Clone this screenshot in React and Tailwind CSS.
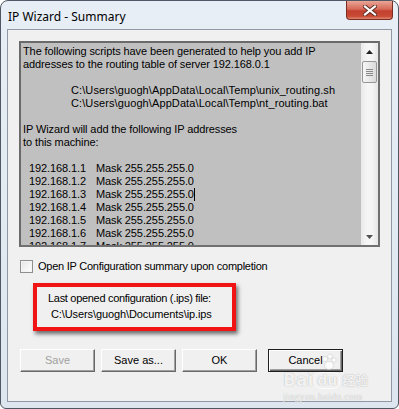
import React from "react";

const ips = ["192.168.1.1", "192.168.1.2", "192.168.1.3", "192.168.1.4", "192.168.1.5", "192.168.1.6", "192.168.1.7"];

const Btn = ({ children, disabled, isDefault }) => (
  <button
    className={
      isDefault
        ? "w-[75px] h-[23px] border border-[#1e1e1e] bg-[#f0f0f0] text-black shadow-[inset_1px_1px_0_#fff,inset_-1px_-1px_0_#696969,inset_-2px_-2px_0_#a0a0a0] flex items-center justify-center"
        : disabled
        ? "w-[75px] h-[23px] border border-t-white border-l-white border-b-[#696969] border-r-[#696969] bg-[#f0f0f0] text-[#a0a0a0] shadow-[inset_-1px_-1px_0_#a0a0a0] flex items-center justify-center"
        : "w-[75px] h-[23px] border border-t-white border-l-white border-b-[#696969] border-r-[#696969] bg-[#f0f0f0] text-black shadow-[inset_-1px_-1px_0_#a0a0a0] flex items-center justify-center"
    }
  >
    {children}
  </button>
);

const App = () => {
  return (
    <div className="w-[399px] h-[409px] bg-white font-['Liberation_Sans',Arial,sans-serif]">
      <div className="relative w-[399px] h-[409px] rounded-t-[8px] rounded-b-[6px] border border-[#4e5763] bg-gradient-to-b from-[#e7eef5] to-[#dde6ef] flex flex-col px-[6px] pb-[6px]">
        {/* title bar */}
        <div className="h-[28px] flex items-start">
          <div className="pl-[1px] pt-[8px] text-[12px] leading-[16px] text-black font-['Noto_Sans',sans-serif]">
            IP Wizard - Summary
          </div>
          <div className="ml-auto mr-[-1px] w-[47px] h-[19px] rounded-b-[4px] border border-t-0 border-[#7a2c22] bg-[linear-gradient(to_bottom,#eaa597,#d66a58_45%,#c2402f_55%,#c94a35_85%,#e08a70)] flex items-center justify-center">
            <svg width="14" height="11" viewBox="0 0 14 11">
              <path d="M2 1.5 L12 9.5 M12 1.5 L2 9.5" stroke="#5a2a24" strokeWidth="4" strokeLinecap="square" />
              <path d="M2 1.5 L12 9.5 M12 1.5 L2 9.5" stroke="#fff" strokeWidth="2.2" strokeLinecap="square" />
            </svg>
          </div>
        </div>

        {/* client area */}
        <div className="flex-1 border border-[#8f98a3] bg-[#f0f0f0] flex flex-col text-[11px] text-black">
          {/* text box */}
          <div className="ml-[11px] mt-[11px] w-[361px] h-[206px] border-2 border-t-[#6a6a6a] border-l-[#6a6a6a] border-b-[#707070] border-r-[#707070] flex bg-[#c0c0c0]">
            <div className="flex-1 overflow-hidden pl-[2px] pt-[2px] leading-[13px] tracking-[-0.1px] whitespace-pre">
              <div>The following scripts have been generated to help you add IP</div>
              <div>addresses to the routing table of server 192.168.0.1</div>
              <div>&nbsp;</div>
              <div className="pl-[48px] tracking-[0.1px]">C:\Users\guogh\AppData\Local\Temp\unix_routing.sh</div>
              <div className="pl-[48px] tracking-[0.1px]">C:\Users\guogh\AppData\Local\Temp\nt_routing.bat</div>
              <div>&nbsp;</div>
              <div>IP Wizard will add the following IP addresses</div>
              <div>to this machine:</div>
              <div>&nbsp;</div>
              {ips.map((ip, i) => (
                <div key={ip} className="flex pl-[6px]">
                  <span className="w-[67px]">{ip}</span>
                  <span>Mask 255.255.255.0</span>
                  {i === 2 && <span className="w-px h-[13px] bg-black" />}
                </div>
              ))}
            </div>
            {/* scrollbar */}
            <div className="w-[17px] flex flex-col items-center bg-[linear-gradient(to_right,#e9e9e9,#f5f5f5_35%,#f5f5f5_65%,#e6e6e6)]">
              <div className="h-[17px] w-full flex items-center justify-center">
                <svg width="7" height="4" viewBox="0 0 7 4">
                  <path d="M3.5 0 L7 4 L0 4 Z" fill="#202020" />
                </svg>
              </div>
              <div className="mt-[1px] w-[15px] h-[22px] rounded-[2px] border border-[#979797] bg-gradient-to-r from-[#f7f7f7] to-[#dadada] flex flex-col items-center justify-center gap-[1px]">
                <div className="w-[7px] h-px bg-[#8a8a8a]" />
                <div className="w-[7px] h-px bg-[#8a8a8a]" />
                <div className="w-[7px] h-px bg-[#8a8a8a]" />
                <div className="w-[7px] h-px bg-[#8a8a8a]" />
              </div>
              <div className="flex-1" />
              <div className="h-[17px] w-full flex items-center justify-center">
                <svg width="7" height="4" viewBox="0 0 7 4">
                  <path d="M0 0 L7 0 L3.5 4 Z" fill="#505050" />
                </svg>
              </div>
            </div>
          </div>

          {/* checkbox */}
          <div className="ml-[12px] mt-[13px] flex items-center h-[13px]">
            <div className="w-[13px] h-[13px] border border-[#8e8f8f] bg-gradient-to-br from-[#e4e4e4] to-white shadow-[inset_0_0_0_1px_#f4f4f4]" />
            <span className="ml-[5px] leading-[13px] tracking-[-0.25px]">Open IP Configuration summary upon completion</span>
          </div>

          {/* highlighted info box */}
          <div className="ml-[25px] mt-[10px] w-[203px] h-[48px] border-4 border-[#f01414] shadow-[2px_3px_4px_rgba(0,0,0,0.55)] pl-[11px] pt-[3px] leading-[16px] tracking-[-0.3px]">
            <div>Last opened configuration (.ips) file:</div>
            <div className="pl-[3px] tracking-[-0.1px]">C:\Users\guogh\Documents\ip.ips</div>
          </div>

          {/* buttons */}
          <div className="ml-[12px] mt-[18px] flex">
            <Btn disabled>Save</Btn>
            <div className="w-[6px]" />
            <Btn>Save as...</Btn>
            <div className="w-[6px]" />
            <Btn>OK</Btn>
            <div className="w-[11px]" />
            <Btn isDefault>Cancel</Btn>
          </div>
        </div>

        {/* watermark */}
        <div className="absolute left-[282px] top-[352px] pointer-events-none flex flex-col items-start text-white/85 [text-shadow:0_0_1px_rgba(0,0,0,0.35)]">
          <svg width="18" height="18" viewBox="0 0 18 18" className="ml-[37px] opacity-80">
            <circle cx="5" cy="6" r="2.6" fill="#fff" stroke="#c8c8c8" strokeWidth="0.6" />
            <circle cx="10" cy="3.5" r="2.4" fill="#fff" stroke="#c8c8c8" strokeWidth="0.6" />
            <circle cx="14" cy="7" r="2.2" fill="#fff" stroke="#c8c8c8" strokeWidth="0.6" />
            <ellipse cx="9" cy="12.5" rx="4.5" ry="4" fill="#fff" stroke="#c8c8c8" strokeWidth="0.6" />
          </svg>
          <div className="flex items-end h-[18px] leading-[18px] font-['DejaVu_Sans',sans-serif] font-bold text-[17px]">
            <span>Bai</span>
            <span className="ml-[1px] px-[2px] rounded-[7px] border border-white/70 text-[14px] leading-[15px]">du</span>
            <span className="ml-[2px] text-[13px] font-['Noto_Sans_CJK_SC',sans-serif]">经验</span>
          </div>
          <div className="mt-[3px] text-[10px] leading-[10px] font-['Liberation_Serif',serif] tracking-[0.3px]">jingyan.baidu.com</div>
        </div>
      </div>
    </div>
  );
};

export default App;
